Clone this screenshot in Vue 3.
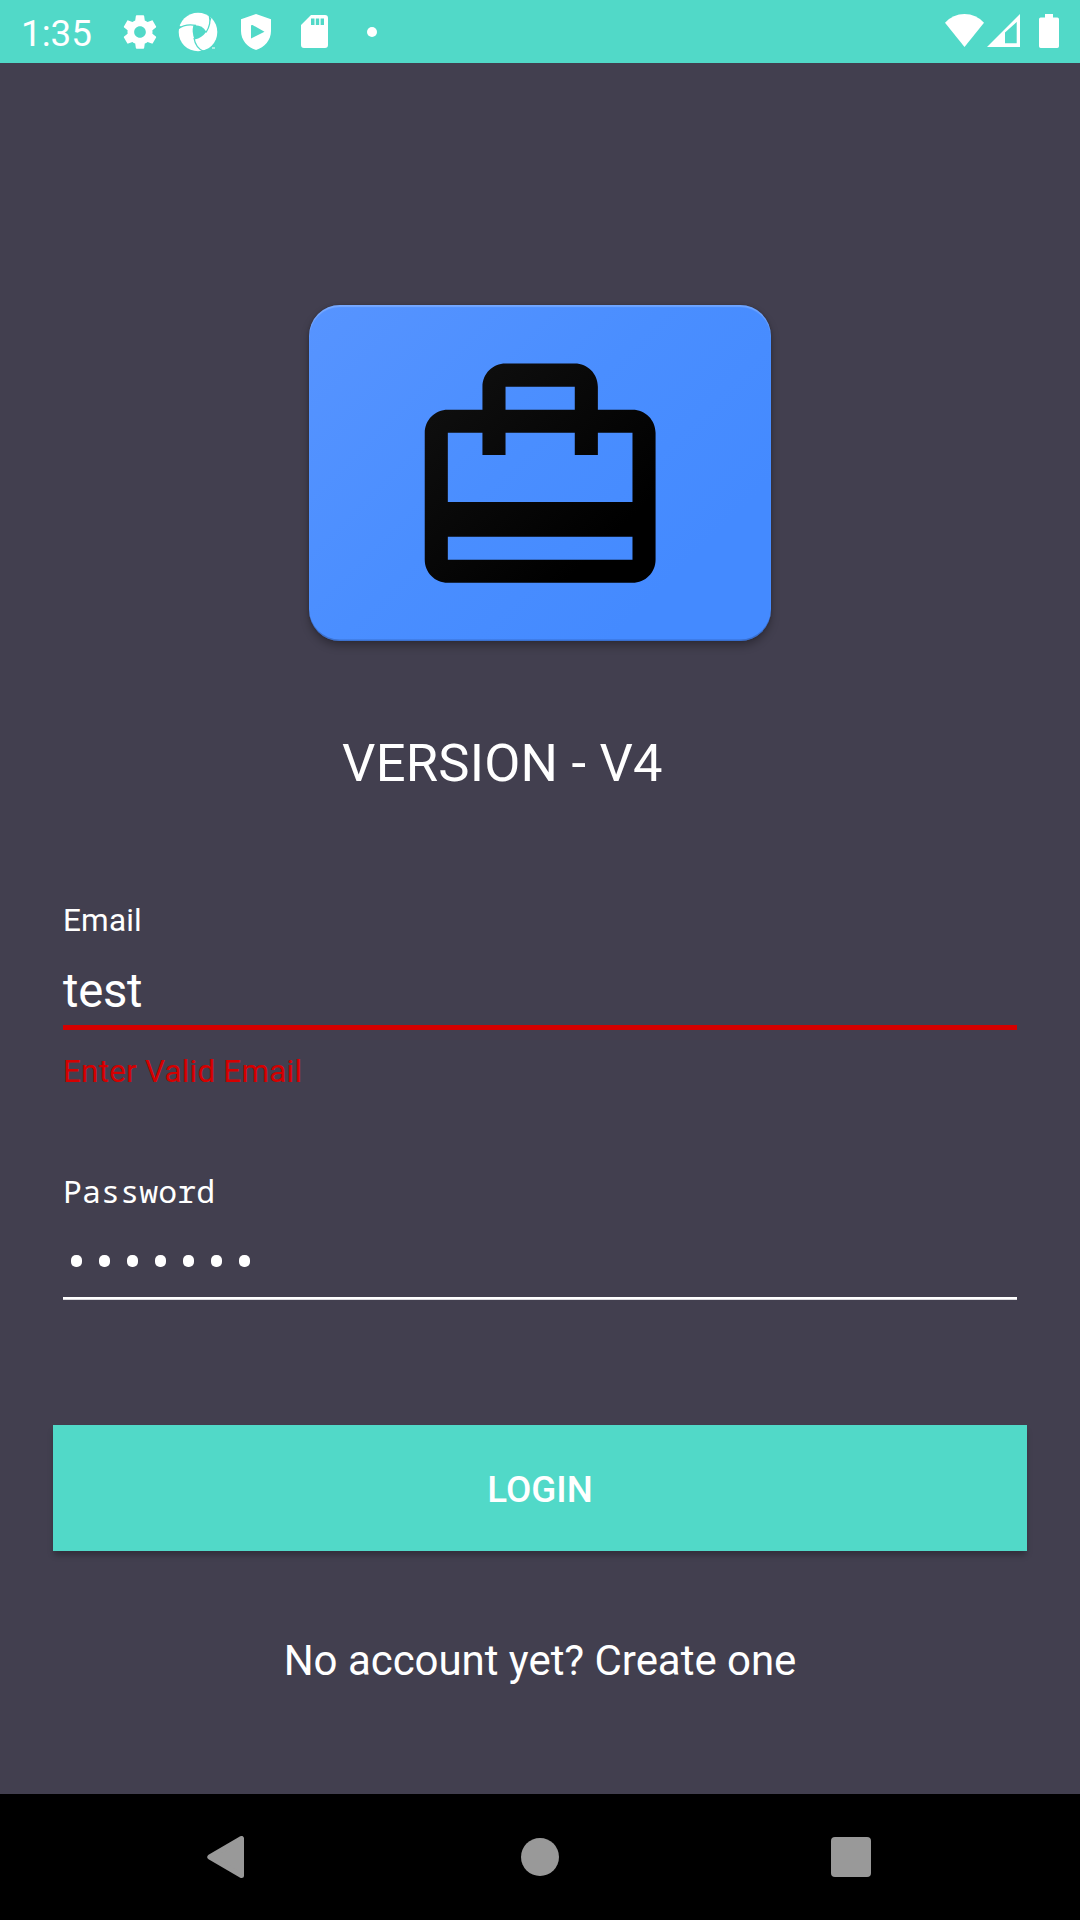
<script setup>
const passwordLength = 7
</script>

<template>
  <div class="screen">
    <header class="status">
      <span class="time">1:35</span>
      <svg class="gear" width="40" height="40" viewBox="0 0 24 24"><path fill="#fff" d="M19.43 12.98c.04-.32.07-.64.07-.98s-.03-.66-.07-.98l2.11-1.65c.19-.15.24-.42.12-.64l-2-3.46c-.12-.22-.39-.3-.61-.22l-2.49 1c-.52-.4-1.08-.73-1.69-.98l-.38-2.65C14.46 2.18 14.25 2 14 2h-4c-.25 0-.46.18-.49.42l-.38 2.65c-.61.25-1.17.59-1.69.98l-2.49-1c-.23-.09-.49 0-.61.22l-2 3.46c-.13.22-.07.49.12.64l2.11 1.65c-.04.32-.07.65-.07.98s.03.66.07.98l-2.11 1.65c-.19.15-.24.42-.12.64l2 3.46c.12.22.39.3.61.22l2.49-1c.52.4 1.08.73 1.69.98l.38 2.65c.03.24.24.42.49.42h4c.25 0 .46-.18.49-.42l.38-2.65c.61-.25 1.17-.59 1.69-.98l2.49 1c.23.09.49 0 .61-.22l2-3.46c.12-.22.07-.49-.12-.64l-2.11-1.65zM12 15.5c-1.93 0-3.5-1.57-3.5-3.5s1.57-3.5 3.5-3.5 3.5 1.57 3.5 3.5-1.57 3.5-3.5 3.5z" /></svg>
      <svg class="wheel" width="40" height="40" viewBox="0 0 40 40">
        <circle cx="20" cy="20" r="19.3" fill="#fff" />
        <path fill="#51d9c8" d="M15.3 13.4Q24 12.5 28.3 19.8Q24 26 16.6 27.6Q13.5 20 15.3 13.4Z" />
        <g fill="none" stroke="#51d9c8" stroke-width="1.3">
          <path d="M0 17Q7 11.500 18 13.500" />
          <path d="M31.300 3.500Q33.500 12 28 20.500" />
          <path d="M26 39.500Q17.500 36 16 26" />
        </g>
        <path fill="#51d9c8" d="M31 4L33.500 6.500L32 9ZM0 17L1 14L4 14.500ZM25.500 38.300L31 37L29.500 40L25 40Z" />
        <path fill="#fff" d="M34 35.500h3v1h-3z" />
      </svg>
      <svg class="shield" width="30" height="36" viewBox="0 0 30 36"><path fill="#fff" fill-rule="evenodd" d="M15 0L30 5.300V17C30 26 23.500 33.500 15 36C6.500 33.500 0 26 0 17V5.300ZM10 12V24.500L23.500 17.800L11.500 11Q10 10.500 10 12Z" /></svg>
      <svg class="sd" width="27" height="33" viewBox="0 0 27 33"><path fill="#fff" fill-rule="evenodd" d="M10 0H24Q27 0 27 3V30Q27 33 24 33H3Q0 33 0 30V10ZM10 3.500V10H13.500V3.500ZM14.800 3.500V10H18.200V3.500ZM19.600 3.500V10H23V3.500Z" /></svg>
      <i class="more"></i>
      <span class="grow"></span>
      <svg class="wifi" width="39" height="33" viewBox="0 0 39 33"><path fill="#fff" d="M0 8.700Q8 0 19.500 0Q31 0 39 8.700L19.500 33Z" /></svg>
      <svg class="signal" width="33" height="33" viewBox="0 0 33 33"><path fill="#fff" fill-rule="evenodd" d="M0 33L33 0V33ZM18 18.500V29.300H29.700V8Z" /></svg>
      <svg class="battery" width="20" height="34" viewBox="0 0 20 34"><path fill="#fff" d="M6 0H14V3.500H18.300Q20 3.500 20 5.200V32.300Q20 34 18.300 34H1.700Q0 34 0 32.300V5.200Q0 3.500 1.700 3.500H6Z" /></svg>
    </header>

    <main class="content">
      <div class="logo">
        <svg width="277" height="277" viewBox="0.03 -0.04 24 24">
          <defs>
            <linearGradient id="bag" x1="0" y1="0" x2="1" y2="1">
              <stop offset="0" stop-color="#111" />
              <stop offset="0.8" stop-color="#000" />
            </linearGradient>
          </defs>
          <path fill="url(#bag)" d="M20 6h-3V4c0-1.110-.89-2-2-2H9c-1.110 0-2 .89-2 2v2H4c-1.110 0-2 .89-2 2v11c0 1.110.89 2 2 2h16c1.110 0 2-.89 2-2V8c0-1.110-.89-2-2-2zM9 4h6v2H9V4zm11 15H4v-2h16v2zm0-5H4V8h3v1.930h2V8h6v1.930h2V8h3v6z" />
        </svg>
      </div>
      <div class="version">VERSION - V4</div>

      <div class="label email">Email</div>
      <div class="value">test</div>
      <div class="line invalid"></div>
      <div class="error">Enter Valid Email</div>

      <div class="label password">Password</div>
      <div class="dots"><i v-for="n in passwordLength" :key="n"></i></div>
      <div class="line"></div>

      <button class="login">LOGIN</button>
      <div class="create">No account yet? Create one</div>
    </main>

    <nav class="nav">
      <svg width="38" height="42" viewBox="0 0 38 42"><path fill="#999" stroke="#999" stroke-width="5" stroke-linejoin="round" d="M2.800 21L34.500 2.500V39.500Z" /></svg>
      <i class="home"></i>
      <i class="recent"></i>
    </nav>
  </div>
</template>

<style>
body {
  margin: 0;
  background: #423f4f;
}
</style>

<style scoped>
.screen {
  width: 1080px;
  height: 1920px;
  display: flex;
  flex-direction: column;
  overflow: hidden;
  background: #423f4f;
  color: #fff;
  font-family: Roboto, sans-serif;
}
svg { display: block; flex: none; }
.status {
  box-sizing: border-box;
  height: 63px;
  flex: none;
  display: flex;
  align-items: center;
  padding: 0 21px 0 21px;
  background: #51d9c8;
}
.time { width: 99px; font-size: 36.75px; line-height: 42px; margin-top: 4px; }
.wheel { margin-left: 18px; }
.shield { margin: 1px 0 0 23px; }
.sd { margin-left: 30px; }
.more { width: 10px; height: 10px; margin-left: 39px; border-radius: 50%; background: #fff; }
.grow { flex: 1; }
.wifi { margin-top: -3px; }
.signal { margin: -2px 0 0 3px; }
.battery { margin: -1px 0 0 19px; }
.content {
  flex: 1;
  min-height: 0;
  display: flex;
  flex-direction: column;
  padding: 242px 63px 0;
}
.logo {
  box-sizing: border-box;
  width: 462px;
  height: 336px;
  flex: none;
  align-self: center;
  display: flex;
  justify-content: center;
  padding-top: 35px;
  border-radius: 31px;
  background: linear-gradient(135deg, #5794ff 0%, #4a8eff 45%, #448aff 80%);
  box-shadow: inset 0 2px 1px rgba(255, 255, 255, 0.2), inset 0 -1.500px 0.500px rgba(20, 30, 70, 0.25), 0 5px 8px rgba(0, 0, 0, 0.28), 0 0 3px rgba(0, 0, 0, 0.18);
}
.version { margin: 92px 0 0 279px; font-size: 52.5px; line-height: 60px; letter-spacing: 0.22px; }
.label { font-size: 31.5px; line-height: 36px; }
.email { margin-top: 110px; letter-spacing: 0.2px; }
.value { margin-top: 24px; font-size: 47.25px; line-height: 56px; letter-spacing: -0.3px; }
.line { height: 3px; flex: none; margin-top: 30px; background: linear-gradient(#fff 2px, #d9d8dc 2px); }
.line.invalid { height: 5px; margin-top: 6px; background: #d50000; }
.error { margin-top: 24px; font-size: 31.5px; line-height: 36px; letter-spacing: 0.18px; color: #d50000; }
.password { margin-top: 83px; letter-spacing: 0.15px; font-family: "Noto Sans Mono", "DejaVu Sans Mono", monospace; }
.dots { display: flex; gap: 17px; margin: 46px 0 0 8px; }
.dots i { width: 11px; height: 12px; border-radius: 5px; background: #fff; }
.login {
  height: 126px;
  flex: none;
  margin: 125px -10px 0;
  padding: 4px 0 0;
  border: 0;
  background: #51d9c8;
  color: #fff;
  font: 500 36.75px/44px Roboto, sans-serif;
  box-shadow: 0 5px 6px -1px rgba(0, 0, 0, 0.26);
}
.create { margin-top: 85px; text-align: center; font-size: 42px; line-height: 50px; letter-spacing: -0.04px; }
.nav {
  height: 126px;
  flex: none;
  box-sizing: border-box;
  display: flex;
  align-items: center;
  justify-content: space-between;
  padding: 0 209px 0 207px;
  background: #000;
}
.home { width: 38px; height: 38px; margin-left: 4px; border-radius: 50%; background: #999; }
.recent { width: 40px; height: 40px; border-radius: 4px; background: #999; }
</style>
